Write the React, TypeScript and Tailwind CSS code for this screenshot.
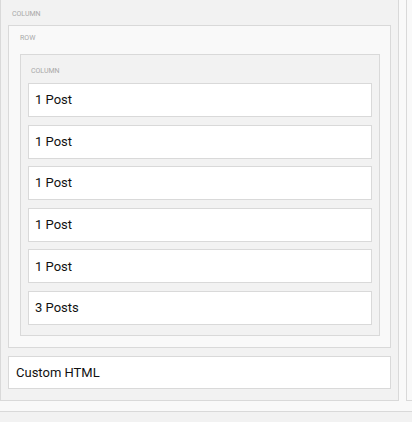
import React from "react";

const Card = ({ label, h = "h-[34px]", pl = "pl-[6px]" }: { label: string; h?: string; pl?: string }) => (
  <div className={`${h} ${pl} bg-white border border-[#d9d9d9] flex items-center text-[13px] text-[#111]`}>
    {label}
  </div>
);

export default function App() {
  const posts = ["1 Post", "1 Post", "1 Post", "1 Post", "1 Post", "3 Posts"];
  return (
    <div className="w-[412px] h-[422px] flex flex-col bg-[#f9f9f9] overflow-hidden" style={{ fontFamily: "Roboto, 'Liberation Sans', sans-serif" }}>
      <div className="h-[411px] flex">
        <div className="w-[399px] h-[401px] bg-[#f2f2f2] border-x border-b border-[#d9d9d9] px-[7px] flex flex-col">
          <div className="h-[25px] pt-[9px] pl-[4px] text-[7px] leading-[10px] text-[#a8a8a8] uppercase">Column</div>
          <div className="bg-[#f9f9f9] border border-[#d9d9d9] pl-[11px] pr-[10px] pb-[11px] flex flex-col">
            <div className="h-[28px] pt-[7px] text-[7px] leading-[10px] text-[#a8a8a8] uppercase">Row</div>
            <div className="bg-[#f2f2f2] border border-[#d9d9d9] px-[7px] pb-[10px] flex flex-col">
              <div className="h-[28px] pt-[11px] pl-[3px] text-[7px] leading-[10px] text-[#a8a8a8] uppercase">Column</div>
              <div className="flex flex-col gap-[7.6px]">
                {posts.map((p, i) => (
                  <Card key={i} label={p} />
                ))}
              </div>
            </div>
          </div>
          <div className="mt-[8px]">
            <Card label="Custom HTML" h="h-[33px]" pl="pl-[7px]" />
          </div>
        </div>
        <div className="ml-[7px] flex-1 h-[401px] border-l border-b border-[#d9d9d9] bg-[#f9f9f9]" />
      </div>
      <div className="flex-1 border-t border-[#d9d9d9] bg-[#f2f2f2]" />
    </div>
  );
}
